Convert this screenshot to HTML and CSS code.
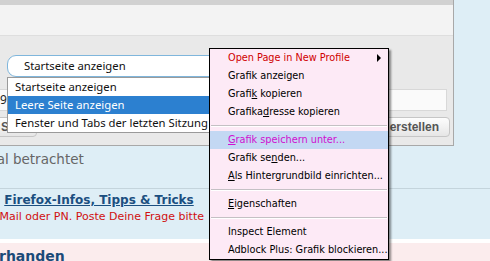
FILE: index.html
```html
<!DOCTYPE html>
<html lang="de">
<head>
    <meta charset="UTF-8">
    <title>Einstellungen</title>
    <link rel="stylesheet" href="styles.css">
</head>
<body>
    <div id="screen">
        <div class="dialog">
            <div class="dialog-strip"></div>
            <div class="dialog-head"></div>
            <div class="dialog-body">
                <div class="combo">Startseite anzeigen</div>
                <div class="field">9%</div>
                <div class="buttons">
                    <span class="btn btn-left">Seite</span>
                    <span class="btn btn-right">Lesezeichen erstellen</span>
                </div>
            </div>
        </div>

        <div class="page">
            <div class="note">Wurde schon 12 mal betrachtet</div>
            <div class="info">
                <a class="info-link" href="#">Firefox-Infos, Tipps &amp; Tricks</a>
                <div class="info-warn">Keine Hilfe per Mail oder PN. Poste Deine Frage bitte</div>
            </div>
        </div>
        <div class="page-gap"></div>
        <div class="page-pink">
            <div class="pink-title">rhanden</div>
        </div>

        <ul class="dropdown">
            <li>Startseite anzeigen</li>
            <li class="selected">Leere Seite anzeigen</li>
            <li>Fenster und Tabs der letzten Sitzung anzeigen</li>
        </ul>

        <div class="menu">
            <div class="item red">Open Page in New Profile<span class="arrow"></span></div>
            <div class="item">Grafik anzeigen</div>
            <div class="item">Grafi<u>k</u> kopieren</div>
            <div class="item">Grafika<u>d</u>resse kopieren</div>
            <div class="sep"></div>
            <div class="item active"><u>G</u>rafik speichern unter...</div>
            <div class="item">Grafik se<u>n</u>den...</div>
            <div class="item"><u>A</u>ls Hintergrundbild einrichten...</div>
            <div class="sep"></div>
            <div class="item"><u>E</u>igenschaften</div>
            <div class="sep"></div>
            <div class="item">Inspect Element</div>
            <div class="item">Adblock Plus: Grafik blockieren...</div>
        </div>
    </div>
</body>
</html>
```

FILE: styles.css
```css
body {
    margin: 0;
    background-color: #deeef6;
}

#screen {
    position: relative;
    width: 490px;
    height: 261px;
    overflow: hidden;
}

.dialog {
    width: 453px;
    height: 145px;
    border-right: 1px solid #a8a8a8;
    border-bottom: 1px solid #a8a8a8;
    background-color: #e9e9e9;
}

.dialog-strip {
    height: 5px;
    background-color: #d1d1d1;
}

.dialog-head {
    height: 30px;
    background-color: #f3f3f3;
    border-bottom: 1px solid #dedede;
}

.dialog-body {
    padding-top: 19px;
    font-family: "Noto Sans", sans-serif;
}

.combo {
    margin-left: 7px;
    width: 260px;
    height: 20px;
    border: 1px solid #7fb6dc;
    border-radius: 9px 0 0 9px;
    background: #fff;
    font-size: 11.3px;
    line-height: 20px;
    padding-left: 16px;
    color: #111;
}

.field {
    margin-top: 12px;
    margin-left: -3px;
    width: 446px;
    height: 20px;
    border: 1px solid #d8d8d8;
    background: #fafafa;
    font-size: 12px;
    line-height: 20px;
    padding-left: 2px;
    color: #222;
}

.buttons {
    margin-top: 6px;
    display: flex;
    justify-content: space-between;
    width: 450px;
}

.btn {
    height: 18px;
    border: 1px solid #c6c6c6;
    border-radius: 4px;
    background: linear-gradient(#fdfdfd, #e6e6e6);
    font-family: "Liberation Sans", Arial, sans-serif;
    font-weight: bold;
    font-size: 12px;
    line-height: 18px;
    color: #555;
}

.btn-left {
    margin-left: -4px;
    padding: 0 6px 0 4px;
}

.btn-right {
    padding: 0 10px;
}

.page {
    font-family: "DejaVu Sans", Verdana, sans-serif;
}

.note {
    padding-top: 4px;
    height: 38px;
    margin-left: -130px;
    font-size: 13.5px;
    line-height: 18px;
    color: #666;
    border-bottom: 1px solid #c4d4dc;
}

.info {
    padding-top: 3px;
    height: 47px;
    width: 198px;
    text-align: center;
}

.info-link {
    display: block;
    font-weight: bold;
    font-size: 12px;
    line-height: 16px;
    color: #1b4f80;
    white-space: nowrap;
}

.info-warn {
    margin-top: 2px;
    margin-left: -90px;
    font-size: 11px;
    line-height: 14px;
    color: #d01010;
    white-space: nowrap;
    text-align: right;
    width: 294px;
}

.page-gap {
    height: 4px;
    background: #fff;
}

.page-pink {
    height: 18px;
    background: #fbeced;
    font-family: "DejaVu Sans", Verdana, sans-serif;
}

.pink-title {
    margin-left: -1px;
    padding-top: 4px;
    font-size: 14px;
    line-height: 18px;
    font-weight: bold;
    color: #1b4a78;
}

.dropdown {
    position: absolute;
    left: 7px;
    top: 77px;
    width: 230px;
    margin: 0;
    padding: 0;
    list-style: none;
    background: #fff;
    border: 1px solid #9a9a9a;
    font-family: "Noto Sans", sans-serif;
    font-size: 11.3px;
    color: #111;
    white-space: nowrap;
}

.dropdown li {
    height: 18px;
    line-height: 18px;
    padding-left: 7px;
}

.dropdown li.selected {
    background: #2c80d0;
    color: #fff;
}

.menu {
    position: absolute;
    left: 209px;
    top: 48px;
    width: 178px;
    padding: 0;
    border: 1px solid #000;
    background: #fdeaf6;
    box-shadow: 2px 2px 2px rgba(0, 0, 0, 0.45);
    font-family: "DejaVu Sans Condensed", "DejaVu Sans", sans-serif;
    font-size: 10.8px;
    color: #000;
}

.item {
    position: relative;
    height: 18px;
    line-height: 18px;
    padding-left: 18px;
    white-space: nowrap;
}

.item.red {
    color: #d00000;
}

.item.active {
    background: #c3d8f3;
    color: #d010d0;
}

.arrow {
    position: absolute;
    right: 7px;
    top: 5px;
    border-left: 4px solid #000;
    border-top: 4px solid transparent;
    border-bottom: 4px solid transparent;
}

.sep {
    height: 10px;
    position: relative;
}

.sep::after {
    content: "";
    position: absolute;
    left: 1px;
    right: 1px;
    top: 4px;
    border-top: 1px solid #c4c0c4;
    border-bottom: 1px solid #fff;
}
```
